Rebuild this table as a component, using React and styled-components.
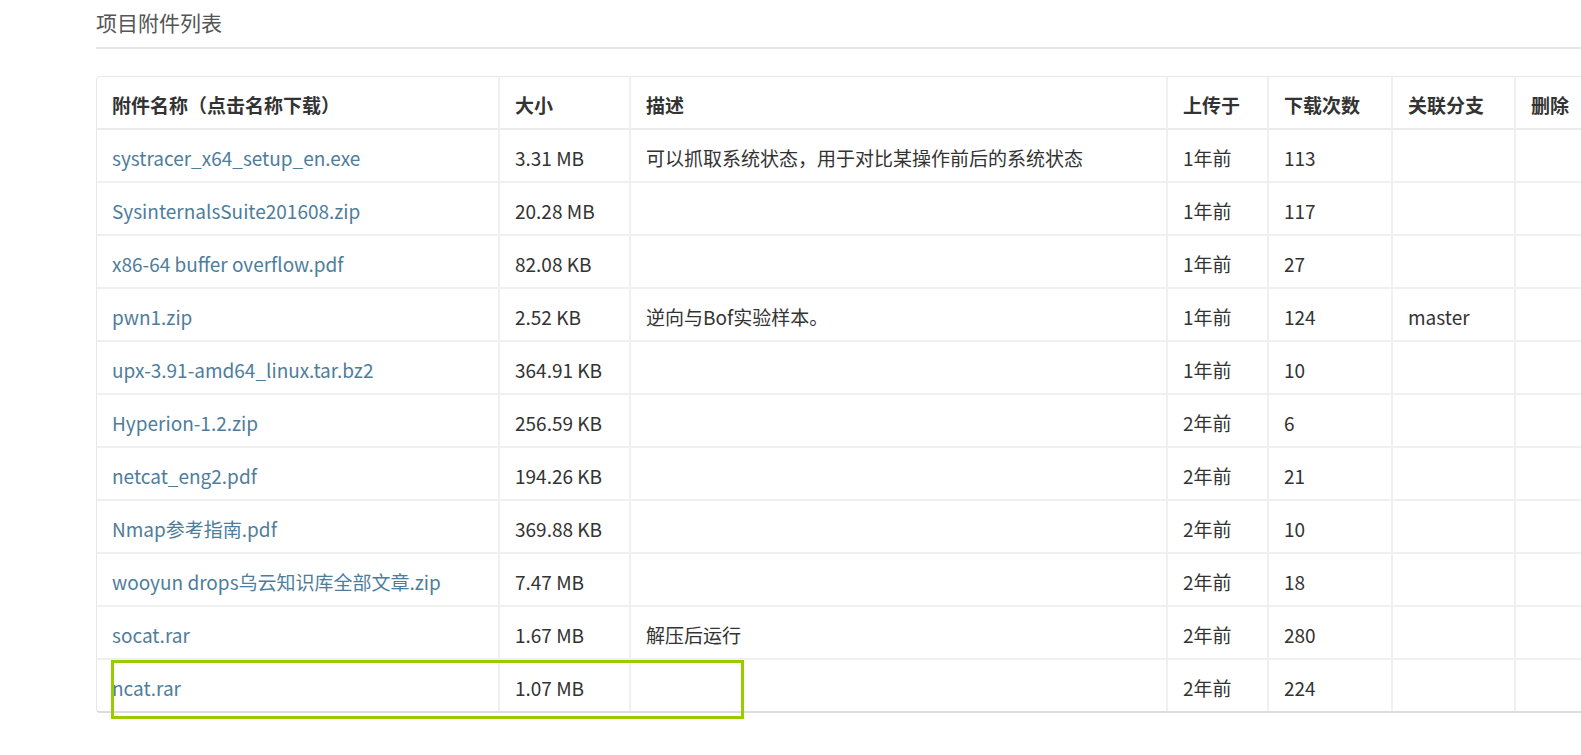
import React from 'react';
import styled, { createGlobalStyle } from 'styled-components';

const GlobalStyle = createGlobalStyle`
    * {
        box-sizing: border-box;
    }
    body {
        margin: 0;
        background: #fff;
        overflow: hidden;
        font-family: 'Noto Sans CJK SC', 'Noto Sans', sans-serif;
        color: #333;
    }
`;

const attachments = [
    { name: 'systracer_x64_setup_en.exe', size: '3.31 MB', desc: '可以抓取系统状态，用于对比某操作前后的系统状态', time: '1年前', count: 113, branch: '' },
    { name: 'SysinternalsSuite201608.zip', size: '20.28 MB', desc: '', time: '1年前', count: 117, branch: '' },
    { name: 'x86-64 buffer overflow.pdf', size: '82.08 KB', desc: '', time: '1年前', count: 27, branch: '' },
    { name: 'pwn1.zip', size: '2.52 KB', desc: '逆向与Bof实验样本。', time: '1年前', count: 124, branch: 'master' },
    { name: 'upx-3.91-amd64_linux.tar.bz2', size: '364.91 KB', desc: '', time: '1年前', count: 10, branch: '' },
    { name: 'Hyperion-1.2.zip', size: '256.59 KB', desc: '', time: '2年前', count: 6, branch: '' },
    { name: 'netcat_eng2.pdf', size: '194.26 KB', desc: '', time: '2年前', count: 21, branch: '' },
    { name: 'Nmap参考指南.pdf', size: '369.88 KB', desc: '', time: '2年前', count: 10, branch: '' },
    { name: 'wooyun drops乌云知识库全部文章.zip', size: '7.47 MB', desc: '', time: '2年前', count: 18, branch: '' },
    { name: 'socat.rar', size: '1.67 MB', desc: '解压后运行', time: '2年前', count: 280, branch: '' },
    { name: 'ncat.rar', size: '1.07 MB', desc: '', time: '2年前', count: 224, branch: '' },
];

const columns = [
    { title: '附件名称（点击名称下载）', width: 401 },
    { title: '大小', width: 131 },
    { title: '描述', width: 537 },
    { title: '上传于', width: 101 },
    { title: '下载次数', width: 124 },
    { title: '关联分支', width: 123 },
    { title: '删除', width: 130 },
];

const App = () => {
    return (
        <StyledPage>
            <GlobalStyle />
            <StyledTitle>项目附件列表</StyledTitle>
            <StyledCard>
                <StyledTable>
                    <colgroup>
                        {columns.map((col) => (
                            <col key={col.title} style={{ width: col.width }} />
                        ))}
                    </colgroup>
                    <thead>
                        <tr>
                            {columns.map((col) => (
                                <StyledHead key={col.title}>{col.title}</StyledHead>
                            ))}
                        </tr>
                    </thead>
                    <tbody>
                        {attachments.map((item, index) => (
                            <StyledRow key={item.name} $last={index === attachments.length - 1}>
                                <td>
                                    <StyledLink href="#">{item.name}</StyledLink>
                                </td>
                                <td>{item.size}</td>
                                <td>{item.desc}</td>
                                <td>{item.time}</td>
                                <td>{item.count}</td>
                                <td>{item.branch}</td>
                                <td></td>
                            </StyledRow>
                        ))}
                    </tbody>
                </StyledTable>
                <StyledHighlight />
            </StyledCard>
        </StyledPage>
    );
};

export default App;
/*--------------------------------------
------------Styled Components-----------
--------------------------------------*/
const StyledPage = styled.div`
    padding-left: 96px;
    width: 1700px;
    min-height: 755px;
`;

const StyledTitle = styled.h3`
    margin: 0;
    padding: 9px 0 12px;
    font-size: 21px;
    font-weight: 400;
    line-height: 26px;
    color: #555;
    border-bottom: 2px solid #e6e6e6;
`;

const StyledCard = styled.div`
    position: relative;
    margin-top: 27px;
    width: 1549px;
    border: 1px solid #e6e8ec;
    border-bottom: 2px solid #dcdcdc;
    border-radius: 4px;
`;

const StyledTable = styled.table`
    width: 1547px;
    table-layout: fixed;
    border-collapse: separate;
    border-spacing: 0;
    font-size: 19px;

    td {
        padding: 17px 15px 13px;
        line-height: 21px;
        color: #333;
        border-left: 2px solid #f0f0f0;
        white-space: nowrap;
        overflow: hidden;
    }
    td:first-child {
        border-left: none;
    }
`;

const StyledHead = styled.th`
    padding: 17px 15px 13px;
    line-height: 21px;
    text-align: left;
    font-weight: 700;
    color: #333;
    border-bottom: 2px solid #ebebeb;
    border-left: 2px solid #f0f0f0;
    white-space: nowrap;

    &:first-child {
        border-left: none;
    }
`;

const StyledRow = styled.tr`
    td {
        border-bottom: ${(props) => (props.$last ? 'none' : '2px solid #f0f0f0')};
    }
`;

const StyledLink = styled.a`
    color: #4e7d9b;
    text-decoration: none;
`;

const StyledHighlight = styled.div`
    position: absolute;
    left: 14px;
    top: 583px;
    width: 633px;
    height: 59px;
    border: 3px solid #99cc00;
    pointer-events: none;
`;
